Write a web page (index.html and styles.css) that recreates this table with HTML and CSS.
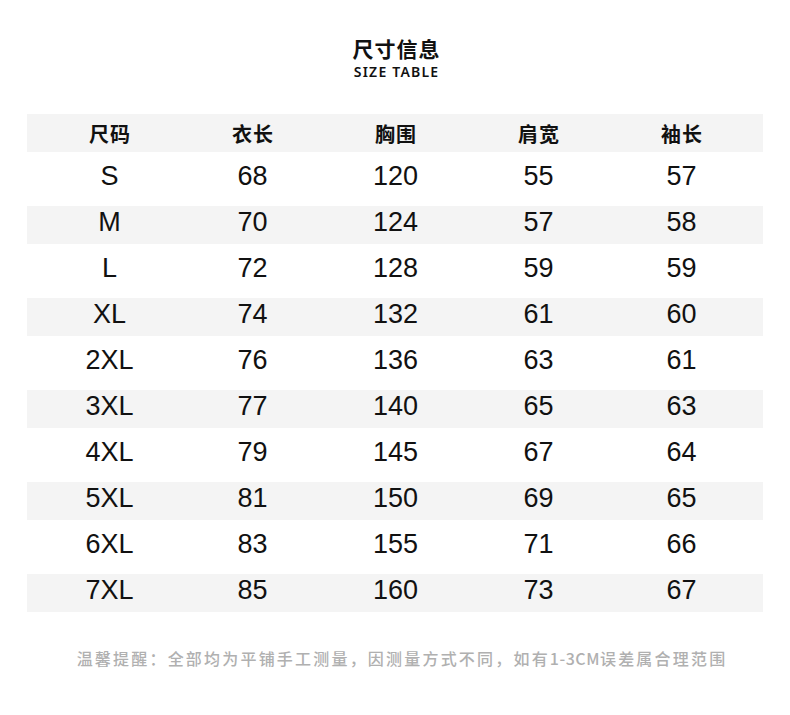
FILE: index.html
```html
<!DOCTYPE html>
<html lang="zh-CN">
<head>
<meta charset="utf-8">
<title>尺寸信息</title>
<link rel="stylesheet" href="styles.css">
</head>
<body>
<div class="page">
  <header class="title">
    <h1 class="title-cn">尺寸信息</h1>
    <div class="title-en">SIZE TABLE</div>
  </header>
  <div class="table">
    <div class="row head"><span>尺码</span><span>衣长</span><span>胸围</span><span>肩宽</span><span>袖长</span></div>
    <div class="row"><span>S</span><span>68</span><span>120</span><span>55</span><span>57</span></div>
    <div class="row alt"><span>M</span><span>70</span><span>124</span><span>57</span><span>58</span></div>
    <div class="row"><span>L</span><span>72</span><span>128</span><span>59</span><span>59</span></div>
    <div class="row alt"><span>XL</span><span>74</span><span>132</span><span>61</span><span>60</span></div>
    <div class="row"><span>2XL</span><span>76</span><span>136</span><span>63</span><span>61</span></div>
    <div class="row alt"><span>3XL</span><span>77</span><span>140</span><span>65</span><span>63</span></div>
    <div class="row"><span>4XL</span><span>79</span><span>145</span><span>67</span><span>64</span></div>
    <div class="row alt"><span>5XL</span><span>81</span><span>150</span><span>69</span><span>65</span></div>
    <div class="row"><span>6XL</span><span>83</span><span>155</span><span>71</span><span>66</span></div>
    <div class="row alt"><span>7XL</span><span>85</span><span>160</span><span>73</span><span>67</span></div>
  </div>
  <p class="note">温馨提醒：全部均为平铺手工测量，因测量方式不同，如有<span class="latin">1-3CM</span>误差属合理范围</p>
</div>
</body>
</html>
```
FILE: styles.css
```css
* { box-sizing: border-box; }
html, body { margin: 0; padding: 0; background: #ffffff; }
body {
  font-family: "Liberation Sans", "Noto Sans CJK SC", sans-serif;
  color: #111111;
}
.page {
  width: 790px;
  padding-top: 33px;
}
.title {
  display: flex;
  flex-direction: column;
  align-items: center;
  padding-left: 2px;
}
.title-cn {
  margin: 0;
  font-family: "Noto Sans CJK SC", sans-serif;
  font-weight: 700;
  font-size: 21px;
  line-height: 30px;
  letter-spacing: 1px;
  padding-left: 1px;
  color: #111;
}
.title-en {
  font-family: "Noto Sans", "Liberation Sans", sans-serif;
  font-weight: 600;
  font-size: 14px;
  line-height: 18px;
  letter-spacing: 1.2px;
  padding-left: 1.2px;
  color: #111;
}
.table {
  margin: 33px 27px 0;
  display: flex;
  flex-direction: column;
  gap: 8px;
}
.row {
  height: 38px;
  display: grid;
  grid-template-columns: repeat(5, 143px);
  padding-left: 11px;
  align-items: center;
  font-size: 27px;
}
.row span {
  text-align: center;
  padding-bottom: 5px;
}
.row.head, .row.alt { background: #f4f4f4; }
.row.head span {
  font-family: "Noto Sans CJK SC", sans-serif;
  font-weight: 700;
  font-size: 20px;
  letter-spacing: 1px;
  padding-left: 1px;
  padding-bottom: 0;
}
.note {
  margin: 36px 0 0;
  padding-left: 14px;
  text-align: center;
  font-family: "Noto Sans CJK SC", sans-serif;
  font-weight: 500;
  font-size: 16px;
  line-height: 20px;
  letter-spacing: 2.2px;
  color: #b0b0b0;
}
.note .latin { letter-spacing: 0.5px; }
```
